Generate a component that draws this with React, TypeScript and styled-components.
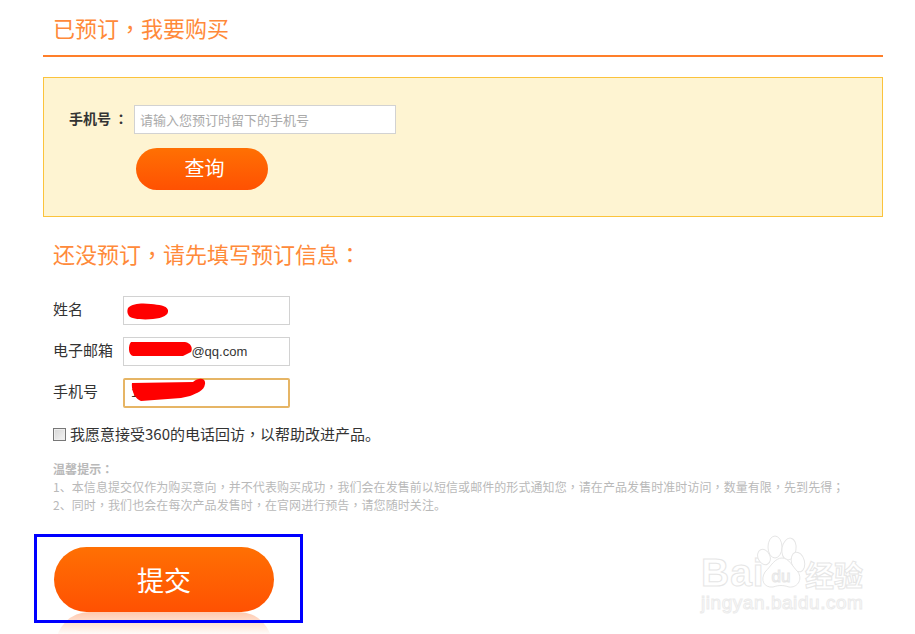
import styled, { createGlobalStyle } from 'styled-components'

const GlobalStyle = createGlobalStyle`
  html, body {
    margin: 0;
    padding: 0;
    background: #fff;
    overflow: hidden;
  }
  body {
    font-family: "Noto Sans CJK SC", "Liberation Sans", sans-serif;
    color: #333;
  }
`

const Page = styled.div`
  position: relative;
  width: 915px;
  height: 634px;
  overflow: hidden;
  padding-left: 43px;
  box-sizing: border-box;
`

const Content = styled.div`
  width: 840px;
  display: flex;
  flex-direction: column;
`

// centred full-width punctuation, as the original font draws it
const Punct = styled.span`
  font-family: "Noto Sans CJK TC", sans-serif;
`

const TopHeading = styled.h2`
  margin: 0;
  height: 44px;
  padding: 11px 0 0 10px;
  font-size: 22px;
  line-height: 32px;
  font-weight: 400;
  color: #ff8a3a;
  border-bottom: 2px solid #ff7f2a;
`

const QueryBox = styled.div`
  margin-top: 20px;
  height: 140px;
  box-sizing: border-box;
  border: 1px solid #fbc33c;
  background: #fef4d2;
  padding: 27px 0 0 25px;
  display: flex;
  flex-direction: column;
`

const QueryRow = styled.div`
  display: flex;
  align-items: center;
`

const QueryLabel = styled.label`
  width: 65px;
  padding-bottom: 4px;
  font-size: 14px;
  font-weight: 700;
  color: #333;
  white-space: nowrap;

  ${Punct} {
    padding-left: 3px;
  }
`

const QueryInput = styled.input`
  width: 262px;
  height: 29px;
  box-sizing: border-box;
  border: 1px solid #d2d2d2;
  background: #fff;
  padding: 0 5px;
  font: 13px "Noto Sans CJK SC", sans-serif;
  outline: none;

  &::placeholder {
    color: #aaa;
  }
`

const PillButton = styled.button<{ $big?: boolean }>`
  display: block;
  width: ${(p) => (p.$big ? 220 : 132)}px;
  height: ${(p) => (p.$big ? 65 : 42)}px;
  border: 0;
  padding: ${(p) => (p.$big ? '0' : '0 0 4px 5px')};
  border-radius: ${(p) => (p.$big ? 33 : 21)}px;
  background: linear-gradient(#ff7003, #ff5102);
  color: #fff;
  font-family: "Noto Sans CJK SC", sans-serif;
  font-size: ${(p) => (p.$big ? 27 : 20)}px;
  font-weight: 400;
`

const QueryButton = styled(PillButton)`
  margin: 14px 0 0 67px;
`

const SubHeading = styled.h3`
  margin: 21px 0 0 10px;
  font-size: 22px;
  line-height: 30px;
  font-weight: 400;
  color: #ff8a3a;
`

const Form = styled.form`
  margin: 28px 0 0 10px;
  display: flex;
  flex-direction: column;
  gap: 12px;
`

const FieldRow = styled.div`
  position: relative;
  display: flex;
  align-items: center;
  height: 29px;
`

const FieldLabel = styled.label`
  width: 70px;
  padding-bottom: 4px;
  font-size: 15px;
  color: #333;
`

const FieldInput = styled.input<{ $focused?: boolean }>`
  width: 167px;
  height: ${(p) => (p.$focused ? 30 : 29)}px;
  box-sizing: border-box;
  border: 1px solid ${(p) => (p.$focused ? '#e6b565' : '#d2d2d2')};
  border-width: ${(p) => (p.$focused ? 2 : 1)}px;
  border-radius: ${(p) => (p.$focused ? 2 : 0)}px;
  padding: 0 6px;
  font: 13px "Liberation Sans", sans-serif;
  color: #333;
  outline: none;
`

const Scribble = styled.svg`
  position: absolute;
  left: 0;
  top: 0;
  pointer-events: none;
`

const ConsentRow = styled.div`
  margin: 17px 0 0 10px;
  display: flex;
  align-items: center;
  height: 20px;
  font-size: 15px;
  color: #333;
`

const ConsentText = styled.span`
  padding-bottom: 2px;
`

const ConsentBox = styled.span`
  width: 13px;
  height: 13px;
  box-sizing: border-box;
  margin-right: 4px;
  border: 1px solid #777;
  background: linear-gradient(135deg, #d6d6d6, #f4f4f4);
  box-shadow: inset 0 0 0 1px #eee;
`

const Tips = styled.div`
  margin: 16px 0 0 10px;
  font-size: 12px;
  line-height: 18px;
  letter-spacing: 0.07px;
  color: #b9b9b9;
`

const TipsTitle = styled.div`
  font-weight: 700;
`

const SubmitFrame = styled.div`
  position: absolute;
  left: 34px;
  top: 534px;
  width: 269px;
  height: 89px;
  box-sizing: border-box;
  border: 3px solid #0000ff;
  padding: 10px 0 0 17px;
`

const Reflection = styled.div`
  position: absolute;
  left: 56px;
  top: 612px;
  width: 216px;
  height: 40px;
  border-radius: 33px 33px 0 0;
  background: linear-gradient(#ffc9ae, #fff 24px);
`

const Watermark = styled.div`
  position: absolute;
  left: 700px;
  top: 535px;
  width: 170px;
  height: 80px;
  pointer-events: none;
`

const WatermarkBrand = styled.div`
  position: absolute;
  left: 1px;
  top: 21px;
  font: 700 39px/34px "Liberation Sans", sans-serif;
  letter-spacing: 1px;
  color: #fff;
  -webkit-text-stroke: 1px #e6e6e6;
`

const WatermarkCn = styled.div`
  position: absolute;
  left: 105px;
  top: 21px;
  font: 700 29px/36px "Noto Sans CJK SC", sans-serif;
  color: #fff;
  -webkit-text-stroke: 1px #e6e6e6;
`

const WatermarkUrl = styled.div`
  position: absolute;
  left: 1px;
  top: 58px;
  font: 400 19px/20px "Liberation Sans", sans-serif;
  letter-spacing: 0.55px;
  color: #fff;
  -webkit-text-stroke: 1px #ebebeb;
`

const WatermarkPaw = styled.svg`
  position: absolute;
  left: 55px;
  top: 0;
`

const App = () => {
  return (
    <Page>
      <GlobalStyle />
      <Content>
        <TopHeading>已预订<Punct>，</Punct>我要购买</TopHeading>
        <QueryBox>
          <QueryRow>
            <QueryLabel>手机号<Punct>：</Punct></QueryLabel>
            <QueryInput placeholder="请输入您预订时留下的手机号" />
          </QueryRow>
          <QueryButton type="button">查询</QueryButton>
        </QueryBox>
        <SubHeading>还没预订<Punct>，</Punct>请先填写预订信息<Punct>：</Punct></SubHeading>
        <Form>
          <FieldRow>
            <FieldLabel>姓名</FieldLabel>
            <FieldInput defaultValue="" />
            <Scribble width="200" height="40" viewBox="0 0 200 40">
              <path d="M75 12 C 80 7 90 7 98 8 C 106 9 113 9 115 14 C 116 19 110 22 100 23 C 90 24 78 23 76 20 C 74 17 74 15 75 12 Z" fill="#f00" />
            </Scribble>
          </FieldRow>
          <FieldRow>
            <FieldLabel>电子邮箱</FieldLabel>
            <FieldInput defaultValue={'                 @qq.com'} />
            <Scribble width="200" height="40" viewBox="0 0 200 40">
              <path d="M78 5 H 132 C 138 6 140 11 138 15 L 130 19 H 80 C 75 18 75 8 78 5 Z" fill="#f00" />
            </Scribble>
          </FieldRow>
          <FieldRow>
            <FieldLabel>手机号</FieldLabel>
            <FieldInput $focused defaultValue="1" />
            <Scribble width="200" height="40" viewBox="0 0 200 40">
              <path d="M79 5 L 140 4 C 146 -1 153 0 152 6 C 151 13 144 15 137 18 L 128 20 L 88 23 C 82 21 78 12 79 5 Z" fill="#f00" />
            </Scribble>
          </FieldRow>
        </Form>
        <ConsentRow>
          <ConsentBox />
          <ConsentText>我愿意接受360的电话回访<Punct>，</Punct>以帮助改进产品。</ConsentText>
        </ConsentRow>
        <Tips>
          <TipsTitle>温馨提示<Punct>：</Punct></TipsTitle>
          <div>1、本信息提交仅作为购买意向<Punct>，</Punct>并不代表购买成功<Punct>，</Punct>我们会在发售前以短信或邮件的形式通知您<Punct>，</Punct>请在产品发售时准时访问<Punct>，</Punct>数量有限<Punct>，</Punct>先到先得<Punct>；</Punct></div>
          <div>2、同时<Punct>，</Punct>我们也会在每次产品发售时<Punct>，</Punct>在官网进行预告<Punct>，</Punct>请您随时关注。</div>
        </Tips>
      </Content>
      <Reflection />
      <SubmitFrame>
        <PillButton $big type="button">提交</PillButton>
      </SubmitFrame>
      <Watermark>
        <WatermarkBrand>Bai</WatermarkBrand>
        <WatermarkPaw width="52" height="56" viewBox="0 0 52 56" fill="#fff" stroke="#e6e6e6" strokeWidth="1">
          <ellipse cx="9" cy="22" rx="6" ry="8" transform="rotate(-25 9 22)" />
          <ellipse cx="20" cy="12" rx="7" ry="11" />
          <ellipse cx="34" cy="14" rx="7" ry="11" transform="rotate(10 34 14)" />
          <ellipse cx="43" cy="27" rx="6.5" ry="10" transform="rotate(-15 43 27)" />
          <path d="M27 23 C 34 23 37 31 43 37 C 48 45 42 53 34 52 C 28 50 24 50 18 52 C 9 53 5 45 10 37 C 16 31 20 23 27 23 Z" />
          <text x="26" y="47" textAnchor="middle" fontFamily="Liberation Sans" fontSize="17">du</text>
        </WatermarkPaw>
        <WatermarkCn>经验</WatermarkCn>
        <WatermarkUrl>jingyan.baidu.com</WatermarkUrl>
      </Watermark>
    </Page>
  )
}

export default App
